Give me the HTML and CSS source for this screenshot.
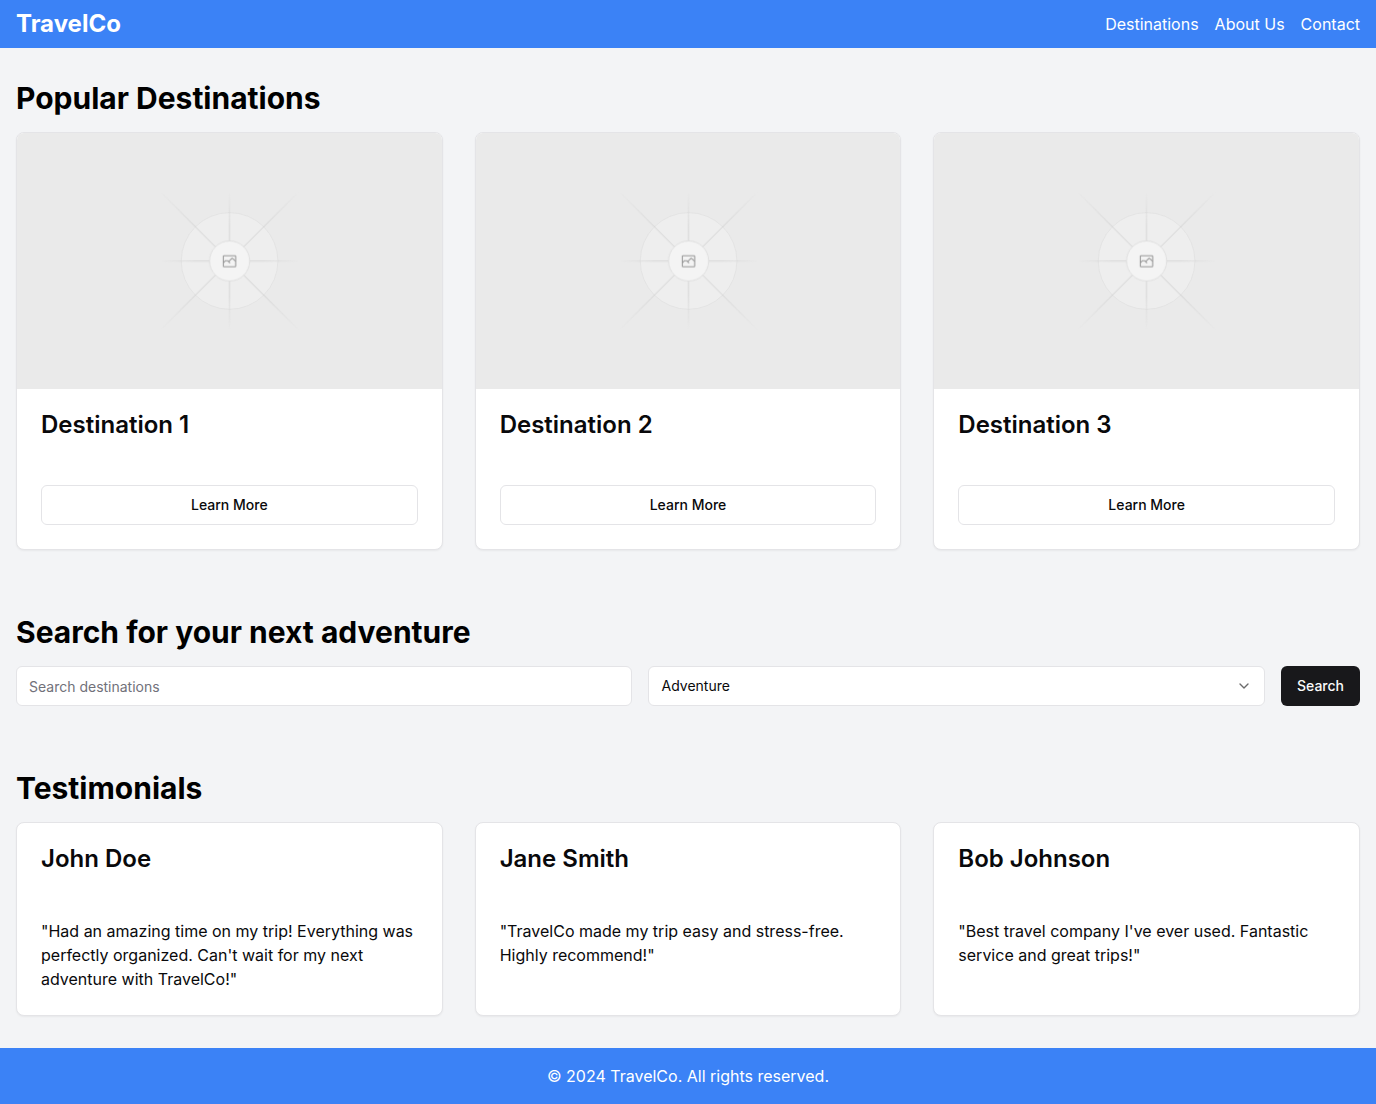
FILE: index.html
```html
<!DOCTYPE html>
<html lang="en">
<head>
  <meta charset="utf-8">
  <meta name="viewport" content="width=device-width, initial-scale=1">
  <title>TravelCo</title>
  <link rel="stylesheet" href="styles.css">
</head>
<body>
  <header class="site-header">
    <h1 class="brand">TravelCo</h1>
    <nav class="site-nav" aria-label="Main">
      <a href="#destinations">Destinations</a>
      <a href="#about">About Us</a>
      <a href="#contact">Contact</a>
    </nav>
  </header>

  <main class="page">
    <section class="section" id="destinations">
      <h2 class="section-title">Popular Destinations</h2>
      <div class="card-grid">
        <article class="card">
          <svg class="card-image" viewBox="0 0 1200 1200" preserveAspectRatio="xMidYMid slice" fill="none" role="img" aria-label="Destination 1">
            <defs>
              <linearGradient id="ray-fade" x1="324" y1="0" x2="877" y2="0" gradientUnits="userSpaceOnUse">
                <stop offset="0.15" stop-color="#c9c9c9" stop-opacity="0"/>
                <stop offset="0.32" stop-color="#c9c9c9"/>
                <stop offset="0.68" stop-color="#c9c9c9"/>
                <stop offset="0.85" stop-color="#c9c9c9" stop-opacity="0"/>
              </linearGradient>
              <linearGradient id="diagonal-fade" x1="324" y1="0" x2="877" y2="0" gradientUnits="userSpaceOnUse">
                <stop offset="0" stop-color="#c9c9c9" stop-opacity="0"/>
                <stop offset="0.25" stop-color="#c9c9c9"/>
                <stop offset="0.75" stop-color="#c9c9c9"/>
                <stop offset="1" stop-color="#c9c9c9" stop-opacity="0"/>
              </linearGradient>
              <g id="placeholder">
                <circle cx="600.7" cy="599.9" r="136.6" fill="#eeeeee" stroke="#e2e2e2" stroke-width="2.4"/>
                <g opacity="0.6">
                  <path d="M324 598.5H877V601.3H324Z" fill="url(#ray-fade)"/>
                  <path d="M324 598.5H877V601.3H324Z" fill="url(#ray-fade)" transform="rotate(90 600.7 599.9)"/>
                  <path d="M324 598.7H877V601.1H324Z" fill="url(#diagonal-fade)" transform="rotate(45 600.7 599.9)"/>
                  <path d="M324 598.7H877V601.1H324Z" fill="url(#diagonal-fade)" transform="rotate(-45 600.7 599.9)"/>
                </g>
                <circle cx="600.7" cy="599.9" r="56.6" fill="#f4f4f4" stroke="#dcdcdc" stroke-width="2.4"/>
                <g stroke="#989898" stroke-width="3" stroke-linejoin="round">
                  <rect x="583" y="585" width="35" height="31" rx="2"/>
                  <path d="M583 605l6-6h6l7 7M598 602l10-10 10 9"/>
                </g>
              </g>
            </defs>
            <use href="#placeholder"/>
          </svg>
          <h3 class="card-title">Destination 1</h3>
          <div class="card-body">
            <button class="button button-outline" type="button">Learn More</button>
          </div>
        </article>
        <article class="card">
          <svg class="card-image" viewBox="0 0 1200 1200" preserveAspectRatio="xMidYMid slice" fill="none" role="img" aria-label="Destination 2">
            <use href="#placeholder"/>
          </svg>
          <h3 class="card-title">Destination 2</h3>
          <div class="card-body">
            <button class="button button-outline" type="button">Learn More</button>
          </div>
        </article>
        <article class="card">
          <svg class="card-image" viewBox="0 0 1200 1200" preserveAspectRatio="xMidYMid slice" fill="none" role="img" aria-label="Destination 3">
            <use href="#placeholder"/>
          </svg>
          <h3 class="card-title">Destination 3</h3>
          <div class="card-body">
            <button class="button button-outline" type="button">Learn More</button>
          </div>
        </article>
      </div>
    </section>

    <section class="section">
      <h2 class="section-title">Search for your next adventure</h2>
      <form class="search">
        <input class="field" type="text" placeholder="Search destinations" aria-label="Search destinations">
        <div class="select-wrap">
          <select class="field" aria-label="Trip type">
            <option>Adventure</option>
            <option>Relaxation</option>
            <option>Culture</option>
          </select>
          <svg class="chevron" viewBox="0 0 24 24" aria-hidden="true"><path d="m6 9 6 6 6-6"/></svg>
        </div>
        <button class="button button-primary" type="button">Search</button>
      </form>
    </section>

    <section class="section" id="about">
      <h2 class="section-title">Testimonials</h2>
      <div class="card-grid">
        <article class="card">
          <h3 class="card-title">John Doe</h3>
          <p class="card-body">"Had an amazing time on my trip! Everything was perfectly organized. Can't wait for my next adventure with TravelCo!"</p>
        </article>
        <article class="card">
          <h3 class="card-title">Jane Smith</h3>
          <p class="card-body">"TravelCo made my trip easy and stress-free. Highly recommend!"</p>
        </article>
        <article class="card">
          <h3 class="card-title">Bob Johnson</h3>
          <p class="card-body">"Best travel company I've ever used. Fantastic service and great trips!"</p>
        </article>
      </div>
    </section>
  </main>

  <footer class="site-footer" id="contact">
    <p>© 2024 TravelCo. All rights reserved.</p>
  </footer>
</body>
</html>
```
FILE: styles.css
```css
*,
*::before,
*::after {
  box-sizing: border-box;
}

body {
  margin: 0;
  min-height: 100vh;
  display: flex;
  flex-direction: column;
  background: #f3f4f6;
  color: #000;
  font-family: Inter, "Liberation Sans", sans-serif;
  font-size: 16px;
  line-height: 24px;
}

h1,
h2,
h3,
p {
  margin: 0;
}

.site-header {
  display: flex;
  align-items: center;
  justify-content: space-between;
  padding: 8px 16px;
  background: #3b82f6;
  color: #fff;
}

.brand {
  font-size: 24px;
  line-height: 32px;
  font-weight: 700;
}

.site-nav {
  display: flex;
  gap: 16px;
}

.site-nav a {
  color: inherit;
  text-decoration: none;
}

.page {
  flex: 1;
  display: flex;
  flex-direction: column;
  gap: 64px;
  padding: 32px 16px;
}

.section-title {
  margin-bottom: 16px;
  font-size: 30px;
  line-height: 36px;
  font-weight: 700;
}

.card-grid {
  display: grid;
  grid-template-columns: repeat(3, minmax(0, 1fr));
  gap: 32px;
}

.card {
  overflow: hidden;
  border: 1px solid #e4e4e7;
  border-radius: 8px;
  background: #fff;
  color: #09090b;
  box-shadow: 0 1px 2px rgba(0, 0, 0, 0.05);
}

.card-image {
  display: block;
  width: 100%;
  height: 256px;
  background: #eaeaea;
}

.card-title {
  padding: 24px;
  font-size: 24px;
  line-height: 24px;
  font-weight: 600;
}

.card-body {
  padding: 24px;
}

.button {
  height: 40px;
  padding: 0 16px;
  border: 0;
  border-radius: 6px;
  font: 500 14px/20px Inter, "Liberation Sans", sans-serif;
  cursor: pointer;
}

.button-outline {
  display: block;
  width: 100%;
  border: 1px solid #e4e4e7;
  background: #fff;
  color: #09090b;
}

.button-primary {
  background: #18181b;
  color: #fafafa;
}

.search {
  display: grid;
  grid-template-columns: minmax(0, 1fr) minmax(0, 1fr) auto;
  gap: 16px;
}

.select-wrap {
  position: relative;
}

.field {
  width: 100%;
  height: 40px;
  padding: 8px 12px;
  border: 1px solid #e4e4e7;
  border-radius: 6px;
  background: #fff;
  color: #09090b;
  font: 400 14px/20px Inter, "Liberation Sans", sans-serif;
  appearance: none;
}

.field::placeholder {
  color: #71717a;
}

.chevron {
  position: absolute;
  top: 12px;
  right: 13px;
  width: 16px;
  height: 16px;
  fill: none;
  stroke: #09090b;
  stroke-width: 2;
  stroke-linecap: round;
  stroke-linejoin: round;
  opacity: 0.6;
  pointer-events: none;
}

.site-footer {
  padding: 16px;
  background: #3b82f6;
  color: #fff;
  text-align: center;
}

@media (max-width: 767px) {
  .card-grid,
  .search {
    grid-template-columns: minmax(0, 1fr);
  }
}
```
